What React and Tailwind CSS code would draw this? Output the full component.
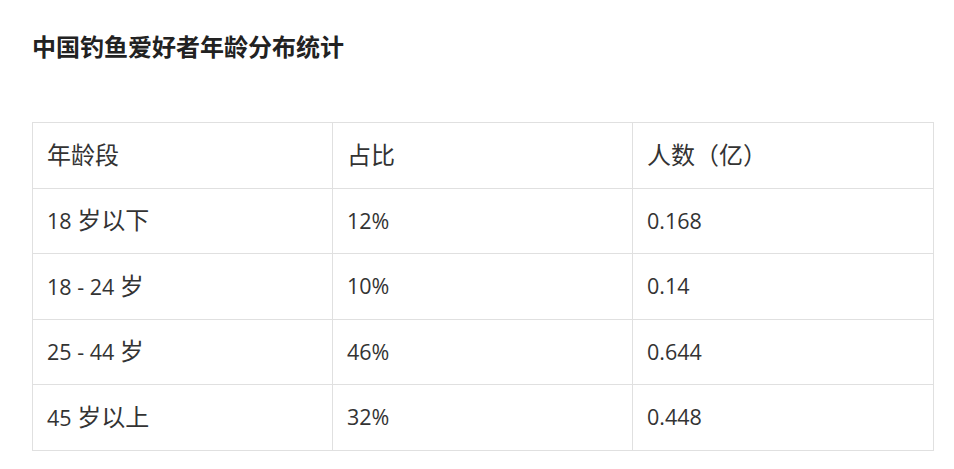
const C = ({ children }) => <span className="text-[24px]">{children}</span>;

export default function App() {
  const rows = [
    [<>18 <C>岁以下</C></>, "12%", "0.168"],
    [<>18 - 24 <C>岁</C></>, "10%", "0.14"],
    [<>25 - 44 <C>岁</C></>, "46%", "0.644"],
    [<>45 <C>岁以上</C></>, "32%", "0.448"],
  ];
  const font = { fontFamily: '"Open Sans", "Noto Sans CJK SC", sans-serif' };
  return (
    <div className="w-[954px] h-[469px] bg-white text-[#333]" style={font}>
      <div className="pl-[32px] pt-[31px] text-[24px] font-bold leading-[32px] text-[#222]">
        中国钓鱼爱好者年龄分布统计
      </div>
      <table className="ml-[32px] mt-[59px] w-[902px] border-collapse table-fixed text-[21.5px] text-[#333] leading-[32px]">
        <tbody>
          <tr className="h-[65.5px]">
            <td className="border border-[#e0e0e0] px-[14px] w-[300px]"><C>年龄段</C></td>
            <td className="border border-[#e0e0e0] px-[14px] w-[300px]"><C>占比</C></td>
            <td className="border border-[#e0e0e0] px-[14px]"><C>人数（亿）</C></td>
          </tr>
          {rows.map((r, i) => (
            <tr key={i} className="h-[65.5px]">
              {r.map((c, j) => (
                <td key={j} className="border border-[#e0e0e0] px-[14px]">
                  {c}
                </td>
              ))}
            </tr>
          ))}
        </tbody>
      </table>
    </div>
  );
}
